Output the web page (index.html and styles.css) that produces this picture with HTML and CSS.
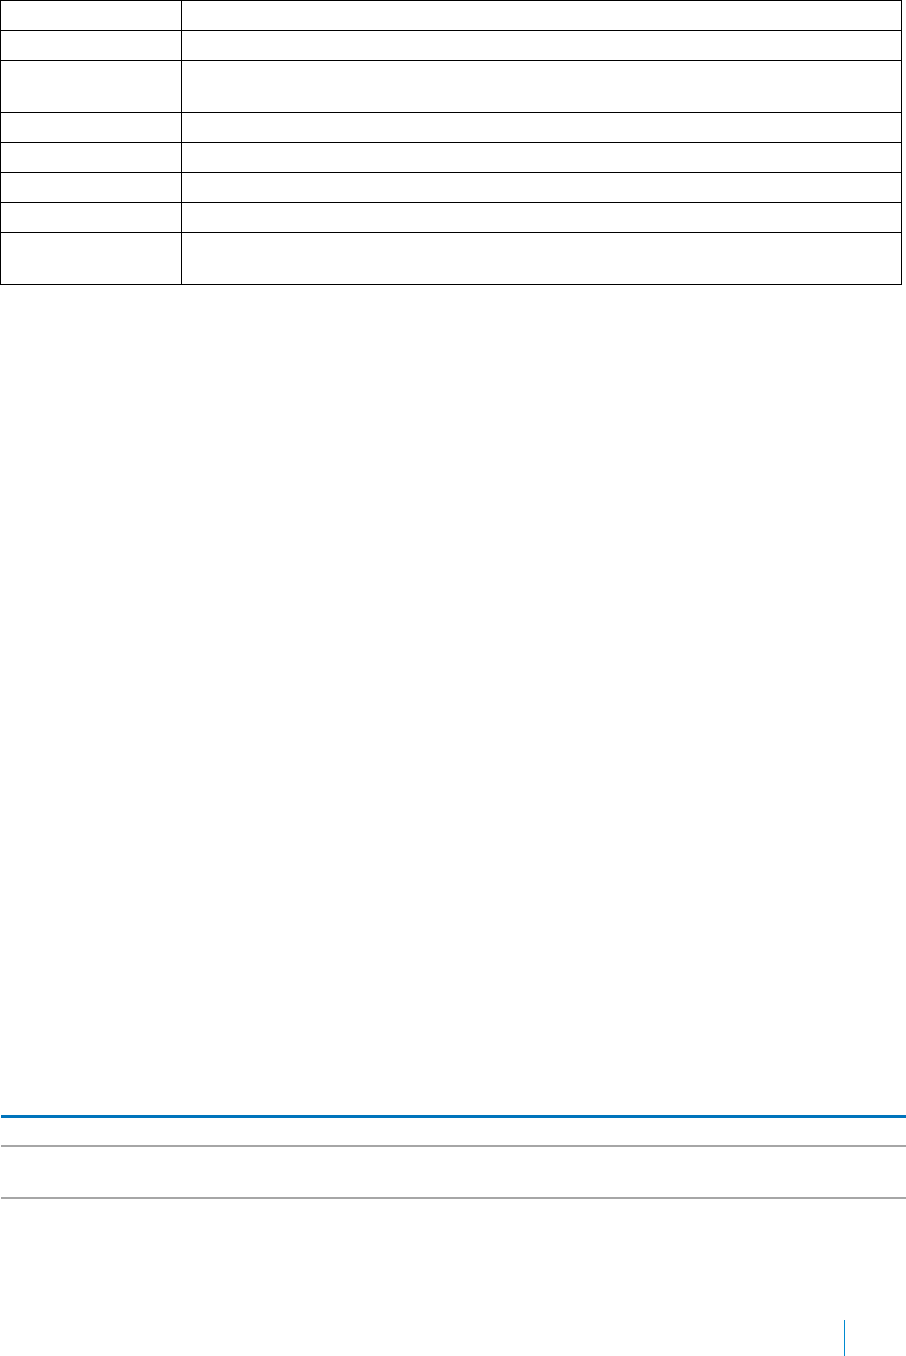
FILE: index.html
```html
<!DOCTYPE html>
<html lang="en">
<head>
    <meta charset="UTF-8">
    <meta name="viewport" content="width=device-width, initial-scale=1.0">
    <title>Document page</title>
    <link rel="stylesheet" href="styles.css">
</head>
<body>
    <table class="spec-table">
        <tr><td class="key"></td><td></td></tr>
        <tr><td class="key"></td><td></td></tr>
        <tr class="tall"><td class="key"></td><td></td></tr>
        <tr><td class="key"></td><td></td></tr>
        <tr><td class="key"></td><td></td></tr>
        <tr><td class="key"></td><td></td></tr>
        <tr><td class="key"></td><td></td></tr>
        <tr class="tall"><td class="key"></td><td></td></tr>
    </table>

    <div class="notes">
        <div class="notes-head"></div>
        <div class="notes-row"></div>
    </div>

    <div class="footer">
        <div class="page-mark"></div>
    </div>
</body>
</html>
```

FILE: styles.css
```css
body {
    font-family: "Liberation Sans", Arial, sans-serif;
    margin: 0;
    padding: 0;
    background: white;
    color: black;
}
.spec-table {
    border-collapse: collapse;
    width: 902px;
}
.spec-table td {
    border: 1px solid black;
    height: 29px;
    padding: 0;
}
.spec-table tr.tall td {
    height: 51px;
}
.spec-table td.key {
    width: 180px;
}
.notes {
    margin: 830px 0 0 1px;
    border-top: 3px solid #0074bc;
}
.notes-head {
    height: 27px;
    border-bottom: 2px solid #a6a6a6;
}
.notes-row {
    height: 50px;
    border-bottom: 2px solid #a6a6a6;
}
.footer {
    margin-top: 121px;
    height: 36px;
    display: flex;
}
.page-mark {
    margin-left: 844px;
    width: 1px;
    height: 36px;
    background: #008ad0;
}
```
